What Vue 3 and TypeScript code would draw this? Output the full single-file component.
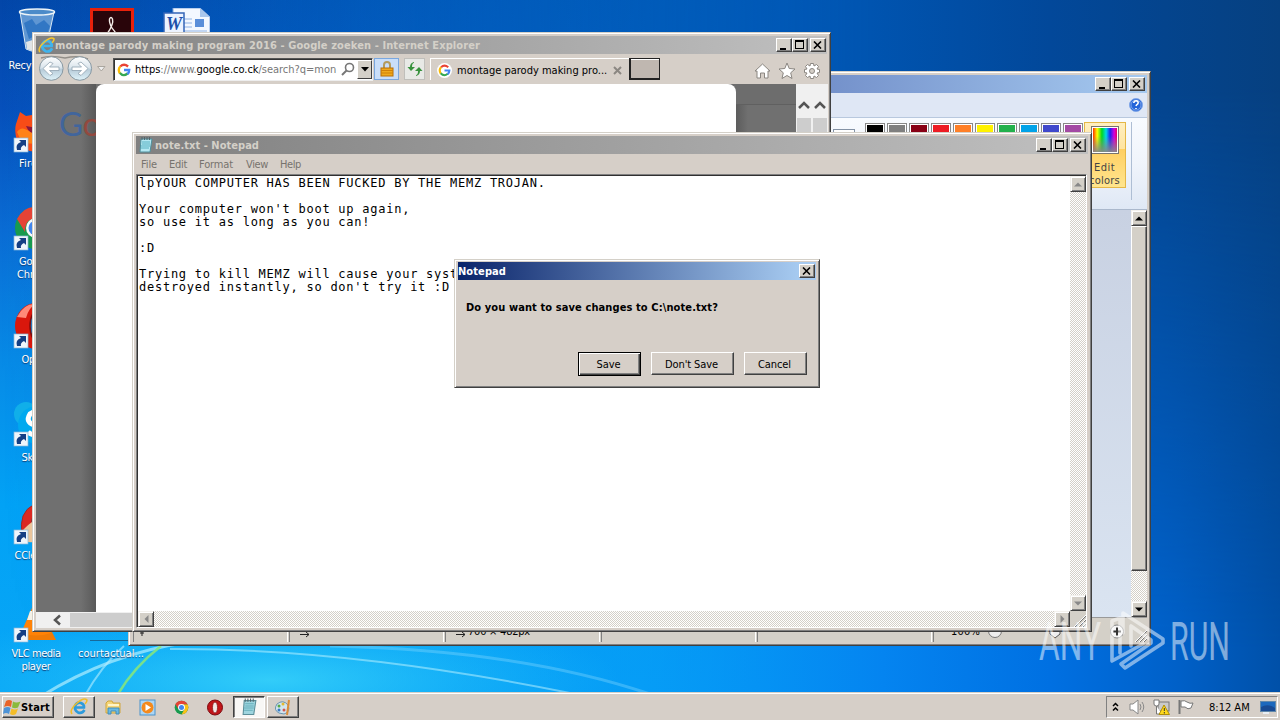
<script setup lang="ts">
interface Shortcut { kind: string; col: number; row: number; lines: { text: string; width: number }[] }

const shortcuts: Shortcut[] = [
  { kind: 'bin', col: 1, row: 1, lines: [{ text: 'Recycle Bin', width: 55 }] },
  { kind: 'acrobat', col: 2, row: 1, lines: [] },
  { kind: 'word', col: 3, row: 1, lines: [] },
  { kind: 'firefox', col: 1, row: 2, lines: [{ text: 'Firefox', width: 34 }] },
  { kind: 'chrome', col: 1, row: 3, lines: [{ text: 'Google', width: 34 }, { text: 'Chrome', width: 38 }] },
  { kind: 'opera', col: 1, row: 4, lines: [{ text: 'Opera', width: 29 }] },
  { kind: 'skype', col: 1, row: 5, lines: [{ text: 'Skype', width: 29 }] },
  { kind: 'ccleaner', col: 1, row: 6, lines: [{ text: 'CCleaner', width: 43 }] },
  { kind: 'vlc', col: 1, row: 7, lines: [{ text: 'VLC media', width: 49 }, { text: 'player', width: 29 }] },
  { kind: 'file', col: 2, row: 7, lines: [{ text: 'courtactual...', width: 66 }] },
]

const palette = ['#000000', '#7f7f7f', '#880015', '#ed1c24', '#ff7f27', '#fff200', '#22b14c', '#00a2e8', '#3f48cc', '#a349a4']
const menus = [
  { text: 'File', width: 16 }, { text: 'Edit', width: 18 }, { text: 'Format', width: 34 },
  { text: 'View', width: 22 }, { text: 'Help', width: 21 },
]
const note = `lpYOUR COMPUTER HAS BEEN FUCKED BY THE MEMZ TROJAN.

Your computer won't boot up again,
so use it as long as you can!

:D

Trying to kill MEMZ will cause your syst
destroyed instantly, so don't try it :D`

// Tracks a run of text so that it fills the given width in pixels.
const vFit = {
  mounted(el: HTMLElement, binding: { value: number }) {
    const natural = el.getBoundingClientRect().width
    const count = (el.textContent ?? '').length
    if (count) el.style.letterSpacing = `${(binding.value - natural) / count}px`
  },
}
</script>

<template>
  <main class="desktop">
    <svg class="wallpaper" width="1280" height="720" viewBox="0 0 1280 720">
      <defs>
        <linearGradient id="sky" x1="0" y1="0" x2="0" y2="1">
          <stop offset="0" stop-color="#0346a8" /><stop offset=".15" stop-color="#0650bb" />
          <stop offset=".32" stop-color="#0a6cd4" /><stop offset=".5" stop-color="#078ae6" />
          <stop offset=".7" stop-color="#02a2f5" /><stop offset=".95" stop-color="#08a6f6" />
        </linearGradient>
        <linearGradient id="top" x1="0" y1="0" x2="1" y2="0">
          <stop offset="0" stop-color="#0054b8" stop-opacity="0" /><stop offset=".45" stop-color="#0056b4" stop-opacity=".7" />
          <stop offset=".68" stop-color="#0054b0" /><stop offset=".82" stop-color="#02489a" />
          <stop offset="1" stop-color="#064080" />
        </linearGradient>
        <linearGradient id="bottom" x1="0" y1="0" x2="1" y2="0">
          <stop offset="0" stop-color="#0094f4" stop-opacity="0" /><stop offset=".5" stop-color="#0494f6" stop-opacity=".5" />
          <stop offset=".69" stop-color="#0484f0" /><stop offset=".82" stop-color="#0070e2" />
          <stop offset=".92" stop-color="#0060c8" /><stop offset="1" stop-color="#0050a8" />
        </linearGradient>
        <linearGradient id="fade" x1="0" y1="0" x2="0" y2="1">
          <stop offset=".12" stop-color="#fff" /><stop offset=".9" stop-color="#000" />
        </linearGradient>
        <mask id="upper"><rect width="1280" height="720" fill="url(#fade)" /></mask>
        <radialGradient id="glow"><stop offset="0" stop-color="#3ad4fa" stop-opacity=".85" /><stop offset="1" stop-color="#20c0fa" stop-opacity="0" /></radialGradient>
      </defs>
      <rect width="1280" height="720" fill="url(#sky)" />
      <rect width="1280" height="720" fill="url(#bottom)" />
      <rect width="1280" height="720" fill="url(#top)" mask="url(#upper)" />
      <ellipse cx="270" cy="680" rx="350" ry="75" fill="url(#glow)" />
      <path d="M40 697Q110 653 190 642" stroke="#bdf3ff" stroke-opacity=".65" stroke-width="3" fill="none" />
      <path d="M84 697Q102 665 124 646" stroke="#b6efff" stroke-opacity=".6" stroke-width="2" fill="none" />
      <path d="M118 694Q134 667 161 646" stroke="#8ae878" stroke-opacity=".85" stroke-width="2.5" fill="none" />
      <path d="M170 649Q350 648 575 694" stroke="#c4f5ff" stroke-opacity=".5" stroke-width="2" fill="none" />
      <path d="M330 646Q520 650 650 694" stroke="#8fdcff" stroke-opacity=".35" stroke-width="3" fill="none" />
    </svg>

    <section class="shortcuts">
      <div v-for="s in shortcuts" :key="s.kind" class="shortcut" :class="['col' + s.col, 'row' + s.row]">
        <svg width="48" height="48" viewBox="0 0 48 48">
          <g v-if="s.kind === 'bin'">
            <path d="M8 4L14 41Q24 46 34 41L42 4Z" fill="#7fb0df" fill-opacity=".75" stroke="#d8e8f4" />
            <path d="M12 15L20 11L24 17L32 12L38 18L34 30L26 26L17 31Z" fill="#276fc0" fill-opacity=".8" />
            <path d="M14 34L24 31L35 34L33 41Q24 45 15 41Z" fill="#e0e4e6" />
            <ellipse cx="25" cy="4" rx="17.5" ry="3" fill="#4c8bc9" stroke="#edf4f8" stroke-width="1.5" />
          </g>
          <g v-else-if="s.kind === 'acrobat'">
            <rect x="3" y="0" width="44" height="48" fill="#e8210b" /><rect x="6" y="3" width="38" height="45" fill="#29050a" />
            <path d="M20 26Q27 16 25.500 11Q24 8 22.500 11Q22 15 25 20Q28 25 33 28" fill="none" stroke="#f4ece8" stroke-width="1.4" />
          </g>
          <g v-else-if="s.kind === 'word'">
            <path d="M11 0H38L48 9V48H11Z" fill="#f3f8ff" stroke="#80a6dc" /><path d="M38 0V9H48Z" fill="#a9c7ed" />
            <path d="M22 11H30M22 15H30M22 19H30M22 23H45" stroke="#8fb2e4" /><rect x="33" y="11" width="9" height="8" fill="#5b8fd9" />
            <rect x="2" y="5" width="20" height="22" fill="#ecf3ff" stroke="#3566b8" stroke-width="1.5" />
            <text x="4" y="22" font-family="Liberation Serif" font-style="italic" font-weight="bold" font-size="18" fill="#1d4ea9">W</text>
          </g>
          <g v-else-if="s.kind === 'firefox'">
            <path d="M5 35Q2 24 4 18L8 6L14 10L20 9L24 5Q44 8 45 25Q43 45 25 46Q11 46 5 35Z" fill="#f84c17" />
            <path d="M5 26Q9 20 15 24L27 28L25 38L10 37Z" fill="#ff8216" /><path d="M14 20L25 22V28Q17 28 14 20Z" fill="#8b183d" />
          </g>
          <g v-else-if="s.kind === 'chrome'">
            <circle cx="24" cy="24" r="21" fill="#179a4e" /><path d="M5 15Q12 2 24 3Q38 4 43 15H24Q13 14 13 28Z" fill="#e54336" />
            <path d="M24 15H43Q49 29 37 41L24 45L34 29Z" fill="#fbc116" /><circle cx="24" cy="24" r="10" fill="#f7fafc" /><circle cx="24" cy="24" r="7.5" fill="#4286ed" />
          </g>
          <g v-else-if="s.kind === 'opera'">
            <ellipse cx="24" cy="24" rx="21" ry="23" fill="#d9170c" /><path d="M5 15Q12 1 24 2Q17 5 14 16Z" fill="#ff8a78" />
            <ellipse cx="27" cy="24" rx="9" ry="17" fill="#2678bd" stroke="#800c0c" stroke-width="1.5" />
          </g>
          <g v-else-if="s.kind === 'skype'">
            <circle cx="14" cy="14" r="12" fill="#10afe9" /><circle cx="25" cy="25" r="19" fill="#00a9ef" />
            <path d="M34 14Q24 9 18 14Q13 22 22 25Q34 28 27 34Q20 36 16 32" fill="none" stroke="#fff" stroke-width="5" />
          </g>
          <g v-else-if="s.kind === 'ccleaner'">
            <path d="M37 7Q18 2 11 18Q6 36 16 42L25 40Q16 28 21 18Q27 11 37 12Z" fill="#db2922" stroke="#9f2927" />
            <path d="M5 39Q13 29 20 24L29 25V43Q12 47 5 39Z" fill="#eac59c" />
          </g>
          <g v-else-if="s.kind === 'vlc'">
            <path d="M9 34H39L44 44H3Z" fill="#f07b06" /><path d="M20 12H29L39 37Q24 42 9 37Z" fill="#ff8206" />
            <path d="M18 15H31L34 24H15Z" fill="#f4f1e7" />
          </g>
          <path v-else d="M3 44.500H44" stroke="#176999" />
          <g v-if="s.row > 1 && s.col === 1">
            <rect x="2" y="32" width="14" height="14" fill="#eff5fb" stroke="#8ab7da" stroke-width=".7" />
            <path d="M5 44Q3 38 9 36L7 34H14V41L12 39Q8 41 9 44Z" fill="#153f84" />
          </g>
        </svg>
        <span v-for="line in s.lines" :key="line.text" v-fit="line.width" class="label">{{ line.text }}</span>
      </div>
    </section>

    <section class="window paint">
      <header class="title"><span class="grow"></span>
        <div class="controls"><i class="min"></i><i class="max"></i><i class="close"><svg width="9" height="8"><path d="M1 0.5L8 7.5M8 0.5L1 7.5" /></svg></i></div>
      </header>
      <div class="paint-tabs">
        <svg width="16" height="16" viewBox="0 0 16 16"><circle cx="8" cy="8" r="6.5" fill="#2464d9" stroke="#82a8e8" /><circle cx="8" cy="8" r="5" fill="none" stroke="#fff" stroke-opacity=".4" /><path d="M5.8 6Q6 3.7 8.3 3.8Q11 4.4 9.8 6.8Q8.3 7.8 8 9M8 11V12" fill="none" stroke="#fff" stroke-width="1.6" /></svg>
      </div>
      <div class="ribbon">
        <div class="ribbon-box"></div>
        <div class="palette"><span v-for="c in palette" :key="c" class="swatch"><b :style="{ background: c }"></b></span></div>
        <div class="edit-colors"><div class="rainbow"></div><span v-fit="21">Edit</span><span v-fit="31">colors</span></div>
        <div class="divider"></div>
      </div>
      <div class="canvas"><div class="grow"></div>
        <div class="vscroll"><i class="sbtn"><svg width="8" height="5"><path d="M0 4.5L4 .5L8 4.5Z" fill="#000" /></svg></i><i class="thumb"></i><span class="grow"></span><i class="sbtn"><svg width="8" height="5"><path d="M0 .5H8L4 4.5Z" fill="#000" /></svg></i></div>
      </div>
      <footer class="status">
        <span class="p1"><svg width="11" height="12"><path d="M5 2V11M3 8H7" stroke="#222" /></svg></span>
        <span class="p2"><svg width="10" height="8"><path d="M0 4.500H9M6 2L9 4.500L6 7" fill="none" stroke="#222" /></svg></span>
        <span class="p2"><svg width="10" height="8"><path d="M0 4.500H9M6 2L9 4.500L6 7" fill="none" stroke="#222" /></svg><em v-fit="62">700 × 482px</em></span>
        <span class="p2"></span><span class="p5"></span>
        <span class="p6"><em v-fit="29">100%</em>
          <svg width="148" height="18" viewBox="0 0 148 18"><circle cx="15" cy="9" r="6.5" fill="#eee" stroke="#777" /><path d="M70 4H80V12L75 16L70 12Z" fill="#eee" stroke="#555" /><circle cx="137" cy="9.500" r="6.500" fill="#f5f5f5" stroke="#888" /><path d="M133 9.500H141M137 5.500V13.500" stroke="#333" stroke-width="2" /></svg>
        </span>
        <svg class="grip" width="13" height="13"><path d="M1 13L13 1M5 13L13 5M9 13L13 9" stroke="#fff" /><path d="M2 13L13 2M6 13L13 6M10 13L13 10" stroke="#777" /></svg>
      </footer>
    </section>

    <section class="window ie">
      <header class="title">
        <svg class="app-icon" width="17" height="17" viewBox="0 0 18 18"><path d="M15 12Q12.500 16.500 8 15Q3.500 12.500 4.500 8Q7 3 11.500 4.500Q15 6.500 14.500 9.500H6" fill="none" stroke="#3fb4ee" stroke-width="2.800" /><path d="M2 16Q-1 12 7 5Q14-1 17 2Q17 4 15 6" fill="none" stroke="#f4c52e" stroke-width="1.600" /></svg>
        <strong v-fit="425">montage parody making program 2016 - Google zoeken - Internet Explorer</strong><span class="grow"></span>
        <div class="controls"><i class="min"></i><i class="max"></i><i class="close"><svg width="9" height="8"><path d="M1 0.5L8 7.5M8 0.5L1 7.5" /></svg></i></div>
      </header>
      <div class="toolbar">
        <svg class="nav" width="76" height="28" viewBox="0 0 76 28">
          <defs><linearGradient id="disc" x1="0" y1="0" x2="0" y2="1"><stop offset="0" stop-color="#fff" /><stop offset=".45" stop-color="#dce6ed" /><stop offset=".55" stop-color="#b8ccd9" /><stop offset="1" stop-color="#dff3fa" /></linearGradient></defs>
          <path d="M5 4Q14 1 29 4Q42 1 52 5" fill="none" stroke="#938f89" stroke-width="1.500" />
          <g fill="url(#disc)" stroke="#8798a2"><circle cx="15.300" cy="14.500" r="11.800" /><circle cx="43.800" cy="14.500" r="11.800" /></g>
          <g fill="#fff" stroke="#8ea1ae" stroke-width=".8"><path d="M7 14.500L14 8L17 9.500L13.500 13H23V16.500H13.500L17 19.500L14 21.500Z" /><path d="M52 14.500L45 8L42 9.500L45.500 13H36V16.500H45.500L42 19.500L45 21.500Z" /></g>
          <path d="M61.500 12.500H69L65.300 17Z" fill="#eee" stroke="#aaa69f" />
        </svg>
        <div class="address">
          <svg width="14" height="14" viewBox="0 0 24 24"><g fill="none" stroke-width="4"><path d="M19 6Q12 0 5.500 6" stroke="#e94235" /><path d="M5.500 6Q1 11 5 18" stroke="#fbbb05" /><path d="M5 17Q11 24 18 18" stroke="#34a853" /><path d="M12 12H21Q21 16 18 19" stroke="#4285f4" /></g></svg>
          <span class="url" v-fit="201"><b>https</b>://www.<b>google.co.ck</b>/search?q=mon</span>
          <svg class="magnify" width="14" height="15"><circle cx="8.500" cy="5.500" r="4" fill="none" stroke="#777" stroke-width="1.600" /><path d="M5.500 8.500L1 13" stroke="#777" stroke-width="2" /></svg>
          <i class="drop"><svg width="8" height="5"><path d="M0 0H8L4 4.500Z" fill="#000" /></svg></i>
        </div>
        <div class="lock"><svg width="14" height="16"><path d="M4 7V4Q4 1 7 1Q10 1 10 4V7" fill="none" stroke="#b49b5d" stroke-width="2" /><rect x="1" y="7" width="12" height="8" fill="#efa91d" stroke="#b86e08" /><path d="M1 9.500H13M1 12H13" stroke="#cf8009" /></svg></div>
        <div class="refresh"><svg width="16" height="14"><g fill="#36913c"><path d="M7 1Q5 1 5 5H8L4 9L.5 5H3Q3 1 7 0Z" /><path d="M9 13Q11 13 11 9H8L12 5L15.500 9H13Q13 13 9 14Z" /></g></svg></div>
        <div class="tab">
          <svg width="15" height="15" viewBox="-2 -2 28 28"><circle cx="12" cy="12" r="14" fill="#fff" /><g fill="none" stroke-width="4"><path d="M19 6Q12 0 5.500 6" stroke="#e94235" /><path d="M5.500 6Q1 11 5 18" stroke="#fbbb05" /><path d="M5 17Q11 24 18 18" stroke="#34a853" /><path d="M12 12H21Q21 16 18 19" stroke="#4285f4" /></g></svg>
          <span v-fit="147">montage parody making pro...</span>
          <svg class="tab-x" width="9" height="9"><path d="M1 1L8 8M8 1L1 8" stroke="#8b8782" stroke-width="2" /></svg>
        </div>
        <div class="newtab"></div><span class="grow"></span>
        <svg class="tools" width="68" height="18" viewBox="0 0 68 18"><g fill="#fff" stroke="#8a8681" stroke-width="1"><path d="M1 9L8.500 2L16 9H14V16H10.500V11H6.500V16H3V9Z" /><path d="M33 1L35.200 6.500L41 7L36.700 10.800L38 16.500L33 13.500L28 16.500L29.300 10.800L25 7L30.800 6.500Z" /><path d="M56.500 1.500H59.500L60 4L62.500 2.500L64.500 4.500L63 7L65.500 7.500V10.500L63 11L64.500 13.500L62.500 15.500L60 14L59.500 16.500H56.500L56 14L53.500 15.500L51.500 13.500L53 11L50.500 10.500V7.500L53 7L51.500 4.500L53.500 2.500L56 4Z" /><circle cx="58" cy="9" r="2.500" fill="#d5cfc8" /></g></svg>
      </div>
      <div class="page">
        <div class="dim left"><span class="logo"><b class="g">G</b><b class="o">o</b></span></div>
        <div class="sheet"></div><div class="dim right"></div>
        <div v-for="n in 2" :key="n" class="flatscroll"><svg width="12" height="9"><path d="M1 7L6 2L11 7" fill="none" stroke="#555" stroke-width="2.500" /></svg><i></i></div>
      </div>
      <div class="flat-h"><svg width="10" height="12"><path d="M8 1.500L3 6L8 10.500" fill="none" stroke="#555" stroke-width="2.500" /></svg><i></i></div>
    </section>

    <section class="window notepad">
      <header class="title">
        <svg class="app-icon" width="16" height="16" viewBox="0 0 16 16"><path d="M3 2H14L12 15H2Z" fill="#b4e8f2" stroke="#4e8f9d" /><path d="M4 5H12M4 7H12M3 9H12M3 11H11" stroke="#58b1c2" /><path d="M4 0V3M6.500 0V3M9 0V3M11.500 0V3" stroke="#52656b" /></svg>
        <strong v-fit="104">note.txt - Notepad</strong><span class="grow"></span>
        <div class="controls"><i class="min"></i><i class="max"></i><i class="close"><svg width="9" height="8"><path d="M1 0.5L8 7.5M8 0.5L1 7.5" /></svg></i></div>
      </header>
      <nav class="menu"><span v-for="m in menus" :key="m.text" v-fit="m.width">{{ m.text }}</span></nav>
      <div class="editor">
        <div class="editor-main">
          <pre>{{ note }}</pre>
          <div class="vscroll"><i class="sbtn"><svg width="8" height="5"><path d="M0 4.5L4 .5L8 4.5Z" fill="#888" /></svg></i><span class="grow"></span><i class="sbtn"><svg width="8" height="5"><path d="M0 .5H8L4 4.5Z" fill="#888" /></svg></i></div>
        </div>
        <div class="hscroll"><i class="sbtn"><svg width="5" height="8"><path d="M4.500 0V8L.5 4Z" fill="#888" /></svg></i><span class="grow"></span><i class="sbtn"><svg width="5" height="8"><path d="M.5 0V8L4.500 4Z" fill="#888" /></svg></i><i class="corner"><svg width="13" height="13"><path d="M1 13L13 1M5 13L13 5M9 13L13 9" stroke="#fff" /><path d="M2 13L13 2M6 13L13 6M10 13L13 10" stroke="#777" /></svg></i></div>
      </div>
    </section>

    <section class="window dialog">
      <header class="title"><strong v-fit="48">Notepad</strong><span class="grow"></span><div class="controls"><i class="close"><svg width="9" height="8"><path d="M1 0.5L8 7.5M8 0.5L1 7.5" /></svg></i></div></header>
      <p><strong v-fit="252">Do you want to save changes to C:\note.txt?</strong></p>
      <div class="actions">
        <button class="primary"><span v-fit="24">Save</span></button>
        <button class="wide"><span v-fit="53">Don't Save</span></button>
        <button><span v-fit="33">Cancel</span></button>
      </div>
    </section>

    <footer class="taskbar">
      <button class="start"><svg width="18" height="17" viewBox="0 0 18 17"><path d="M3 2Q6 0 9 2L8 8Q5 6 1 8Z" fill="#e96328" /><path d="M10 2.500Q13 4.500 17.500 2.500L15 8.500Q12 10 9 8.500Z" fill="#8aba3c" /><path d="M1 9Q5 7 7.500 9L6 15Q3 13 0 15Z" fill="#4e93d6" /><path d="M8.500 9.500Q12 11.500 15 9.500L13 15Q10 17 7 15Z" fill="#f4bd28" /></svg><strong v-fit="29">Start</strong></button>
      <div class="task raised"><svg width="18" height="18" viewBox="0 0 18 18"><path d="M14.500 12Q12 16 8 14.500Q4 12 5 8Q7 3.500 11 5Q14.500 6.500 14 9.500H6" fill="none" stroke="#2d9bdc" stroke-width="2.600" /><path d="M2 16Q-1 12 7 5Q14-1 17 2Q17 4 15 6" fill="none" stroke="#f0bd2a" stroke-width="1.600" /></svg></div>
      <div class="task"><svg width="17" height="17"><path d="M1 4L3 2H7L8 4H15V14H1Z" fill="#f5d578" stroke="#cfa63c" /><path d="M3 6H14" stroke="#fff5c8" stroke-width="2" /><path d="M3 15V9H14V15H11V12H6V15Z" fill="#69b9e5" stroke="#438db7" /></svg></div>
      <div class="task"><svg width="17" height="17"><rect x="1" y="1" width="15" height="15" fill="#add6f4" stroke="#4b93cb" /><circle cx="8.500" cy="8.500" r="6" fill="#f48a1d" /><path d="M6.500 5L12 8.500L6.500 12Z" fill="#fff" /></svg></div>
      <div class="task"><svg width="15" height="15" viewBox="0 0 48 48"><circle cx="24" cy="24" r="22" fill="#179a4e" /><path d="M4 13Q12 2 24 2Q38 3 44 14H24Q13 14 13 28Z" fill="#e54336" /><path d="M24 14H44Q50 29 37 42L24 46L34 29Z" fill="#fbc116" /><circle cx="24" cy="24" r="11" fill="#fff" /><circle cx="24" cy="24" r="8" fill="#4286ed" /></svg></div>
      <div class="task"><svg width="16" height="17"><ellipse cx="8" cy="8.500" rx="7.500" ry="7.500" fill="#c21519" stroke="#7b080d" /><ellipse cx="8" cy="8.500" rx="2.500" ry="5.500" fill="#f1e7e5" stroke="#7c1114" stroke-width=".7" /></svg></div>
      <div class="task pressed"><svg width="17" height="18" viewBox="0 0 16 16"><path d="M3 2H14L12 15H2Z" fill="#9ed5df" stroke="#5b8e99" /><path d="M4 5H12M4 7H12M3 9H12M3 11H11" stroke="#65aeba" /><path d="M4 0V3M6.500 0V3M9 0V3M11.500 0V3" stroke="#52656b" /></svg></div>
      <div class="task raised"><svg width="18" height="17"><path d="M3 5Q9 0 14 6Q17 13 10 15L5 14Q-1 11 3 5Z" fill="#d3e5ef" stroke="#6994af" /><circle cx="5" cy="7" r="1.500" fill="#55a847" /><circle cx="9" cy="5" r="1.500" fill="#e4b92e" /><circle cx="5" cy="11" r="1.500" fill="#377ac5" /><circle cx="10" cy="11" r="1.500" fill="#cf5550" /><path d="M15 1L13 16" stroke="#dc8d38" stroke-width="2" /></svg></div>
      <span class="grow"></span>
      <div class="tray">
        <svg class="chev" width="7" height="10"><path d="M1 4L3.500 1.500L6 4M1 8.500L3.500 6L6 8.500" fill="none" stroke="#000" stroke-width="1.500" /></svg>
        <svg class="speaker" width="18" height="16"><path d="M1 5H4L9 1V15L4 11H1Z" fill="#fff" stroke="#888" /><path d="M11 5Q13 8 11 11M13 3Q16.500 8 13 13" fill="none" stroke="#888" /></svg>
        <svg class="net" width="18" height="17"><rect x="5" y="3" width="11" height="9" fill="#cacaca" stroke="#777" /><path d="M1 1V5Q1 7 3.500 7Q6 7 6 5V1ZM3.500 7V15H9" fill="#fff" stroke="#777" /><path d="M11 6L16.500 15.500H6Z" fill="#ffd91b" stroke="#af8e08" /><path d="M11.300 9V12M11.300 13V14.500" stroke="#333" /></svg>
        <svg class="flag" width="18" height="16"><path d="M2.500 1V15" stroke="#777" stroke-width="2" /><path d="M4 2Q8 1 10 3Q13 5 16 4L14 9Q11 11 8 8H4Z" fill="#fff" stroke="#777" /></svg>
        <span class="clock" v-fit="41">8:12 AM</span>
        <svg width="16" height="15"><rect x=".5" y="1.500" width="15" height="10" fill="#1c68bd" stroke="#6188aa" /><path d="M1 7Q8 3 15 8V11H1Z" fill="#184a93" /><path d="M3 13H9" stroke="#e8eef4" stroke-width="2" /></svg>
      </div>
    </footer>

    <svg class="watermark" width="200" height="66" viewBox="0 0 200 66">
      <g fill="#fff" fill-opacity=".5" font-family="Roboto" font-size="53">
        <text x="1" y="53" textLength="62" lengthAdjust="spacingAndGlyphs">ANY</text><text x="132" y="53" textLength="60" lengthAdjust="spacingAndGlyphs">RUN</text>
      </g>
      <path d="M74 54V14L82 11V46M85 26V6L125 32V36L87 61L83 57L113 36V33L93 19V39M74 54L105 37" fill="none" stroke="#fff" stroke-opacity=".5" stroke-width="3.600" stroke-linejoin="round" stroke-linecap="round" />
    </svg>
  </main>
</template>

<style>
html, body { margin: 0; overflow: hidden; }
</style>
<style scoped>
*, *::after { box-sizing: border-box; }
.desktop { position: relative; width: 1280px; height: 720px; overflow: hidden; font: 11px/13px "DejaVu Sans Condensed", "DejaVu Sans", sans-serif; color: #000; }
svg { display: block; flex: none; }
i, em { font-style: normal; }
.grow { flex: 1; }
span, strong { white-space: pre; }
.wallpaper { position: absolute; left: 0; top: 0; }
.shortcuts { display: grid; grid-template-columns: repeat(3, 75px); grid-template-rows: repeat(7, 98px); padding-top: 8px; position: relative; width: 225px; }
.shortcut { width: 72px; display: flex; flex-direction: column; align-items: center; }
.shortcut svg { margin-bottom: 3px; }
.label { color: #fff; text-shadow: 0 1px 1px #123d75; }
.col1 { grid-column: 1; } .col2 { grid-column: 2; } .col3 { grid-column: 3; }
.row1 { grid-row: 1; } .row2 { grid-row: 2; } .row3 { grid-row: 3; } .row4 { grid-row: 4; } .row5 { grid-row: 5; } .row6 { grid-row: 6; } .row7 { grid-row: 7; }

.window { position: absolute; display: flex; flex-direction: column; background: #d6cfc8; border: 1px solid; border-color: #d4d0c8 #404040 #404040 #d4d0c8; box-shadow: inset 1px 1px #fff, inset -1px -1px #808080; padding: 3px; }
.title { height: 18px; flex: none; display: flex; align-items: center; background: linear-gradient(90deg, #808080, #c0c0c0); color: #d4d0c8; padding-right: 1px; }
.title strong { font-weight: bold; }
.controls { display: flex; height: 14px; }
.controls > i { width: 16px; height: 14px; display: block; position: relative; background: #d4d0c8; border: 1px solid; border-color: #fff #404040 #404040 #fff; box-shadow: inset -1px -1px #808080; }
.controls .min::after { content: ""; display: block; width: 6px; height: 2px; background: #000; margin: 9px 0 0 3px; }
.controls .max::after { content: ""; display: block; width: 9px; height: 9px; border: 1px solid #000; border-top-width: 2px; margin: 1px 0 0 2px; }
.controls .close { margin-left: 2px; padding: 2px 0 0 2px; }
.controls .close:first-child { margin-left: 0; }
.controls path { stroke: #000; stroke-width: 1.6; }

.paint { left: 128px; top: 71px; width: 1023px; height: 575px; }
.paint .title { background: linear-gradient(90deg, #0a246a, #7390ca 68%, #a6caf0); padding-right: 2px; }
.paint-tabs { height: 25px; flex: none; background: #dfe7f5; border-bottom: 1px solid #b8c8de; display: flex; justify-content: flex-end; padding: 4px 3px 0 0; }
.ribbon { height: 92px; flex: none; background: linear-gradient(#f8fbff, #f0f4fb 50%, #dfe8f5); border-bottom: 1px solid #aab8cc; display: flex; padding: 4px 0 0 701px; }
.ribbon-box { width: 22px; height: 50px; border: 1px solid #8493a6; margin-top: 7px; background: #fff; }
.palette { display: flex; gap: 2px; margin-left: 10px; }
.swatch { width: 20px; height: 20px; border: 1px solid #888; padding: 1px; background: #fff; margin-top: 1px; }
.swatch b { display: block; width: 16px; height: 16px; }
.edit-colors { width: 42px; height: 66px; margin: 0 0 0 1px; border: 1px solid #e4b747; background: linear-gradient(#ffefc0, #ffe4a0 40%, #ffcf62 41%, #ffe58e); display: flex; flex-direction: column; align-items: center; padding-top: 3px; color: #444; }
.edit-colors span { margin-left: -1px; }
.rainbow { width: 28px; height: 28px; flex: none; border: 1px solid #77736f; outline: 1px solid #fff; outline-offset: -2px; margin: 0 0 7px -1px; background: linear-gradient(transparent 35%, #888), linear-gradient(90deg, red, #ff0 20%, #00d820 38%, #00d8e8 54%, #2020f0 70%, #d000e0 85%, #f00030); }
.divider { width: 1px; height: 78px; background: #aebed4; margin-left: 5px; }
.canvas { flex: 1; display: flex; background: linear-gradient(#c8d1e2, #dae4f1); }
.vscroll { width: 16px; flex: none; display: flex; flex-direction: column; background: repeating-conic-gradient(#d4d0c8 0 25%, #fff 0 50%) 0 0 / 2px 2px; }
.sbtn { width: 16px; height: 16px; flex: none; display: grid; place-items: center; background: #d4d0c8; border: 1px solid; border-color: #f4f2ee #404040 #404040 #f4f2ee; box-shadow: inset 1px 1px #fff, inset -1px -1px #808080; }
.thumb { height: 345px; background: #d4d0c8; border: 1px solid; border-color: #fff #404040 #404040 #fff; box-shadow: inset -1px -1px #808080; }
.status { height: 25px; flex: none; display: flex; background: #d4d0c8; border-top: 1px solid #999; position: relative; padding-left: 1px; }
.status > span { height: 24px; border-left: 1px solid #808080; border-right: 1px solid #fff; display: flex; padding: 7px 0 0 10px; margin-right: 1px; }
.status .p1 { width: 155px; padding-left: 3px; } .status .p2 { width: 155px; } .status .p5 { width: 175px; }
.status .p2 svg { margin-top: 5px; }
.status em { margin-left: 2px; }
.status .p6 { flex: 1; padding-left: 15px; border-right: 0; }
.status .p6 svg { margin-top: -3px; }
.grip { position: absolute; right: 0; bottom: 0; }

.ie { left: 32px; top: 32px; width: 799px; height: 600px; padding-right: 2px; }
.ie .title { margin-right: 1px; padding-right: 1px; }
.app-icon { margin: 0 0 0 2px; }
.toolbar { height: 30px; flex: none; display: flex; align-items: flex-start; }
.nav { margin-top: 0; }
.address { width: 260px; height: 23px; margin: 4px 0 0 1px; display: flex; align-items: center; background: #fff; border: 1px solid; border-color: #555 #eee #eee #555; padding-left: 3px; box-shadow: inset 1px 1px #333; }
.url { color: #777; margin-left: 4px; width: 202px; }
.url b { font-weight: normal; color: #000; }
.magnify { margin-left: 4px; }
.drop { width: 15px; height: 19px; display: grid; place-items: center; background: #d4d0c8; border: 1px solid; border-color: #fff #404040 #404040 #fff; margin-left: auto; }
.lock, .refresh { width: 25px; height: 22px; margin: 4px 0 0 1px; display: grid; place-items: center; background: #c9def9; border: 1px solid #7aa7df; }
.refresh { width: 21px; margin-left: 5px; background: #e8e9e6; border-color: #c0bfbb; }
.tab { width: 199px; height: 22px; margin: 4px 0 0 5px; display: flex; align-items: center; padding: 1px 0 0 6px; border-left: 1px solid #fff; border-top: 1px solid #fff; }
.tab span { margin-left: 5px; width: 147px; }
.tab-x { margin-left: 9px; }
.newtab { width: 31px; height: 22px; margin-top: 4px; border: solid #222; border-width: 1px 1px 2px 2px; background: #bfb7b0; box-shadow: inset 0 1px #fff; }
.tools { margin: 8px 6px 0 0; }
.page { flex: 1; display: flex; background: #6e6e6e; }
.dim.left { width: 60px; background: linear-gradient(90deg, #707070 75%, #595959); overflow: hidden; padding: 22px 0 0 23px; }
.logo { display: inline-block; font: 33px/34px "Lato", sans-serif; letter-spacing: -.5px; }
.logo b { font-weight: normal; } .logo .g { color: #41659c; } .logo .o { color: #93493f; }
.sheet { width: 640px; background: #fff; border-radius: 8px 8px 0 0; }
.dim.right { flex: 1; background: linear-gradient(90deg, #5c5c5c, #707070 20%); box-shadow: inset 0 20px #6d6d6d, inset 0 21px #606060; }
.flatscroll { width: 16px; background: #f0f0f0; display: flex; flex-direction: column; align-items: center; padding-top: 17px; }
.flatscroll i { width: 14px; height: 350px; background: #cdcdcd; margin-top: 8px; }
.flat-h { height: 16px; flex: none; display: flex; align-items: center; background: #f0f0f0; padding-left: 16px; }
.flat-h i { margin-left: 8px; width: 550px; height: 14px; background: #cdcdcd; }

.notepad { left: 132px; top: 132px; width: 960px; height: 500px; }
.notepad .title { padding-right: 2px; }
.notepad .app-icon { margin-right: 1px; }
.menu { height: 20px; flex: none; display: flex; padding: 4px 0 0 5px; color: #77736e; }
.menu span { margin-right: 12px; display: inline-block; flex: none; }
.menu span:nth-child(3) { margin-right: 13px; }
.editor { flex: 1; display: flex; flex-direction: column; background: #fff; border: 1px solid; border-color: #808080 #fff #fff #808080; box-shadow: inset 1px 1px #303030; padding: 1px 0 0 1px; margin-right: 1px; }
.editor-main { flex: 1; display: flex; }
pre { flex: 1; margin: 0; padding: 1px 0 0 1px; font: 12px/13px "DejaVu Sans Mono", monospace; letter-spacing: .75px; color: #000; }
.hscroll { height: 16px; flex: none; display: flex; background: repeating-conic-gradient(#d4d0c8 0 25%, #fff 0 50%) 0 0 / 2px 2px; }
.corner { width: 16px; height: 16px; background: #d4d0c8; padding: 3px 0 0 3px; }

.dialog { left: 454px; top: 259px; width: 366px; height: 129px; padding: 2px 3px; }
.dialog .title { color: #fff; background: linear-gradient(90deg, #0a246a, #a6caf0 95%); padding: 0 1px 0 0; }
.dialog p { margin: 21px 0 0 8px; }
.actions { display: flex; gap: 10px; align-items: flex-start; margin: 38px 0 0 120px; }
button { font: inherit; color: #000; padding: 0; display: flex; align-items: center; justify-content: center; background: #d6cfc8; border: 1px solid; border-color: #fff #404040 #404040 #fff; box-shadow: inset -1px -1px #808080; border-radius: 0; }
.actions button { width: 63px; height: 23px; padding: 1px 2px 0 0; }
.actions .primary { height: 24px; border: 1px solid #000; box-shadow: inset 1px 1px #fff, inset -1px -1px #404040, inset -2px -2px #808080; padding-top: 0; }
.actions .wide { width: 83px; }

.taskbar { position: absolute; left: 0; right: 0; top: 692px; height: 28px; display: flex; background: #d6cfc8; border-top: 1px solid #d4d0c8; box-shadow: inset 0 1px #fff; padding: 3px 2px 2px; }
.start { width: 52px; height: 22px; margin-right: 9px; padding-right: 3px; }
.task { width: 32px; height: 22px; margin-right: 2px; display: grid; place-items: center; }
.raised { border: 1px solid; border-color: #fff #404040 #404040 #fff; box-shadow: inset -1px -1px #808080; }
.pressed { background: #f8f7f5; border: 1px solid; border-color: #404040 #fff #fff #404040; box-shadow: inset 1px 1px #808080; }
.tray { width: 172px; height: 22px; display: flex; align-items: center; border: 1px solid; border-color: #808080 #fff #fff #808080; padding-left: 5px; }
.speaker { margin-left: 10px; } .net { margin-left: 6px; } .flag { margin-left: 6px; }
.clock { margin-left: 14px; width: 41px; margin-right: 10px; flex: none; }
.watermark { position: absolute; left: 1038px; top: 607px; }
</style>
